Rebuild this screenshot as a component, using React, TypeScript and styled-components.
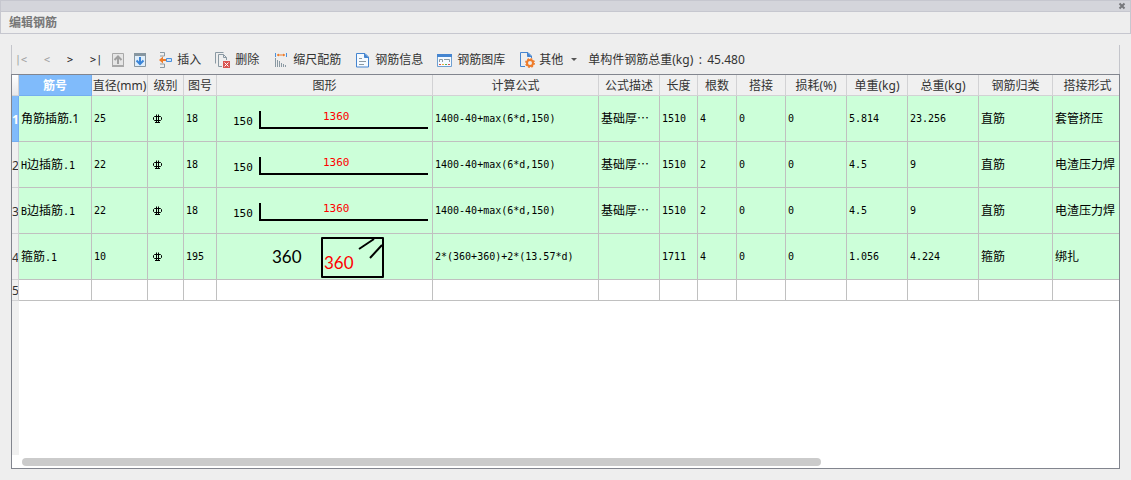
import React from "react";
import styled, { createGlobalStyle } from "styled-components";

const UI_FONT = `"Noto Sans", "Noto Sans CJK SC", sans-serif`;
const MONO_FONT = `"DejaVu Sans Mono", "Noto Sans CJK SC", monospace`;

const GlobalStyle = createGlobalStyle`
  * { box-sizing: border-box; }
  body { margin: 0; background: #eeeeee; font-family: ${UI_FONT}; font-size: 12px; color: #333; }
`;

const Window = styled.div`
  display: flex;
  flex-direction: column;
  min-height: 100vh;
`;

const Caption = styled.div`
  display: flex;
  justify-content: flex-end;
  align-items: center;
  height: 12px;
  padding-right: 4px;
  background: #d4d5db;
  border: 1px solid #c6c7cf;
`;

const CloseButton = styled.button`
  display: flex;
  padding: 0;
  border: 0;
  background: none;
`;

const TitleBar = styled.header`
  height: 22px;
  border: 1px solid #c6c7cf;
  border-top: 0;
`;

const Title = styled.h1`
  margin: 0;
  padding-left: 8px;
  font-size: 12px;
  font-weight: 700;
  line-height: 21px;
  color: #777;
`;

const Body = styled.main`
  display: flex;
  flex: 1;
  flex-direction: column;
  padding: 11px;
`;

const Toolbar = styled.div`
  display: flex;
  align-items: center;
  height: 29px;
  border: 1px solid #c4c5cb;
  border-width: 0 1px;
  white-space: nowrap;
`;

const NavGroup = styled.div`
  display: flex;
  gap: 17px;
  padding: 0 8px 0 3px;
`;

const NavButton = styled.button`
  padding: 0;
  border: 0;
  background: none;
  font: 10px/16px ${MONO_FONT};
  color: #222;
  &:disabled { color: #a0a0a0; }
`;

const MoveGroup = styled.div`
  display: flex;
  gap: 6px;
  padding-right: 9px;
`;

const ActionGroup = styled.div`
  display: flex;
  gap: 14px;
`;

const ToolButton = styled.button`
  display: flex;
  align-items: center;
  gap: 4px;
  padding: 0;
  border: 0;
  background: none;
  font: 12px/16px ${UI_FONT};
  color: #333;
`;

const Caret = styled.span`
  margin: 0 11px 0 4px;
  border: 3px solid transparent;
  border-top-color: #555;
  border-bottom: 0;
`;

const Total = styled.div`
  display: flex;
  line-height: 16px;
`;

const Colon = styled.span`
  width: 14px;
  text-align: center;
`;

const GridPanel = styled.section`
  display: flex;
  flex: 1;
  flex-direction: column;
  border: 1px solid #82858e;
  background: #fff;
  min-width: 0;
`;

const GridView = styled.div`
  flex: 1;
  overflow: hidden;
  background: linear-gradient(to right, #f0f0f0 7px, #fff 7px);
`;

const Table = styled.table`
  width: 100%;
  min-width: 1111px;
  table-layout: fixed;
  border-collapse: separate;
  border-spacing: 0;
`;

const HeadCell = styled.th<{ $active?: boolean }>`
  height: 21px;
  padding: 2px 0 0;
  border: 1px solid ${(p) => (p.$active ? "#74aef0" : "#d2d2d4")};
  border-width: 0 1px 1px 0;
  background: ${(p) => (p.$active ? "#80bbfb" : "#f0f0f0")};
  color: ${(p) => (p.$active ? "#fff" : "#333")};
  font-weight: ${(p) => (p.$active ? 700 : 400)};
  line-height: 18px;
  white-space: nowrap;
`;

const CornerCell = styled(HeadCell).attrs({ as: "td" })`
  background: linear-gradient(#fff, #e8e8ea);
`;

const RowHead = styled(HeadCell)`
  height: auto;
  overflow: hidden;
`;

const Cell = styled.td<{ $empty?: boolean }>`
  height: ${(p) => (p.$empty ? 21 : 46)}px;
  padding: 0 0 0 2px;
  border: 1px solid #c0c0c0;
  border-width: 0 1px 1px 0;
  background: ${(p) => (p.$empty ? "#fff" : "#ccffd9")};
  color: #000;
  line-height: 16px;
  white-space: nowrap;
  overflow: hidden;
`;

const ShapeCell = styled(Cell)`
  padding: 0;
`;

const GradeCell = styled(Cell)`
  padding-left: 4px;
`;

const Half = styled.span`
  font: 10px/16px ${MONO_FONT};
`;

const Full = styled.span`
  font: 12px/16px "Noto Sans CJK SC", sans-serif;
`;

const Drawing = styled.svg`
  display: block;
`;

const ShapeLabel = styled.text<{ $large?: boolean; $red?: boolean }>`
  font: ${(p) => (p.$large ? "17px Lato, sans-serif" : `11px ${MONO_FONT}`)};
  fill: ${(p) => (p.$red ? "#ff0000" : "#000")};
`;

const ScrollTrack = styled.div`
  height: 13px;
  padding: 3px 10px 2px;
`;

const ScrollThumb = styled.div`
  width: 73.5%;
  height: 8px;
  border-radius: 4px;
  background: #cbcbcb;
`;

/* Latin runs are set half-width, Chinese runs full-width. */
const Mixed = ({ text }: { text: string }) => (
  <>
    {(text.match(/[\x20-\x7e]+|[^\x20-\x7e]+/g) || []).map((run, i) =>
      /[\x20-\x7e]/.test(run) ? <Half key={i}>{run}</Half> : <Full key={i}>{run}</Full>
    )}
  </>
);

const Icon = ({ children }: { children: React.ReactNode }) => (
  <svg width="16" height="16" viewBox="0 0 16 16" fill="none" aria-hidden="true">
    {children}
  </svg>
);

const UpIcon = () => (
  <Icon>
    <path d="M2.500 1.500h11v13h-11z" fill="#e6e6e6" stroke="#a9a9a9" />
    <path d="M2 13h12v2H2z" fill="#a9a9a9" />
    <path d="M8 12V5M4.500 8L8 4.500 11.500 8" stroke="#a0a0a0" strokeWidth="2" />
  </Icon>
);

const DownIcon = () => (
  <Icon>
    <path d="M2.500 1.500h11v13h-11z" fill="#dfeefb" stroke="#8796a0" />
    <path d="M2 1h12v3H2z" fill="#8796a0" />
    <path d="M8 5v7M4.500 8.500L8 12l3.500-3.500" stroke="#3a85d8" strokeWidth="2" />
  </Icon>
);

const InsertIcon = () => (
  <Icon>
    <path d="M3 .5h4.500v3.500H3M3 15.500h4.500V12H3" stroke="#8a99a3" />
    <path d="M9.500 6.500h5v3h-5z" fill="#cfe4fa" stroke="#4a90dc" />
    <path d="M2 8l4-3.500v2.500h3v2H6v2.500z" fill="#ee7c2b" />
  </Icon>
);

const DeleteIcon = () => (
  <Icon>
    <path d="M.5 11.500v-11h8M3.500 14.500v-12h5l3 3V8M3.500 14.500H7M8.500 2.500v3h3" stroke="#8a99a3" />
    <path d="M8 9h7v7H8z" fill="#d9534f" />
    <path d="M9.500 10.500l4 4M13.500 10.500l-4 4" stroke="#fff" />
  </Icon>
);

const ScaleIcon = () => (
  <Icon>
    <path d="M2.500 1v4M13.500 1v4" stroke="#4a90dc" />
    <path d="M4 3h8" stroke="#ee7c2b" />
    <path d="M4 3l2-1.500v3zM12 3l-2-1.500v3z" fill="#ee7c2b" />
    <path d="M2.500 6v9M4.500 8v7M6.500 9v6M8.500 11v4M10.500 12v3M12.500 13v2" stroke="#8a99a3" />
  </Icon>
);

const InfoIcon = () => (
  <Icon>
    <path d="M1.500 1.500h8.500l3.500 3.500v10h-12z" fill="#f5faff" stroke="#4585d0" />
    <path d="M9.500 1.500v4h4" fill="#4585d0" stroke="#4585d0" />
    <path d="M4 6.500h3M4 9.500h7M4 12.500h5" stroke="#8a99a3" />
  </Icon>
);

const LibraryIcon = () => (
  <Icon>
    <path d="M.5 2.500h14v12H.5z" fill="#f5faff" stroke="#6f9fd0" />
    <path d="M0 2h15v3H0z" fill="#4585d0" />
    <path d="M2.500 10V7.500h3V10M7 7.500h5.500V10" stroke="#8a99a3" />
    <path d="M2 12.500h2" stroke="#e05050" />
    <path d="M5 12.500h2" stroke="#f0b030" />
    <path d="M8 12.500h2" stroke="#50b060" />
    <path d="M11 12.500h2" stroke="#e05050" />
  </Icon>
);

const OtherIcon = () => (
  <Icon>
    <path d="M6 14.500H1.500v-14h7.500l3.500 3.500v2" stroke="#4585d0" />
    <path d="M8.500 .5v4h4" fill="#4585d0" stroke="#4585d0" />
    <circle cx="11" cy="11" r="3" stroke="#ee7c2b" strokeWidth="2" />
    <circle cx="11" cy="11" r="4.200" stroke="#ee7c2b" strokeWidth="1.500" strokeDasharray="1.800 1.500" />
  </Icon>
);

const GradeSymbol = () => (
  <Drawing width="12" height="12" viewBox="0 0 12 12" fill="none" stroke="#000" role="img" aria-label="HRB400">
    <path d="M2.500 3.500h6l1 1v2l-1 1h-6l-1-1v-2zM4.500 1.500v8M6.500 1.500v8M3 9.500h5" />
  </Drawing>
);

const StarterShape = () => (
  <Drawing width="215" height="45">
    <ShapeLabel x="16" y="29">150</ShapeLabel>
    <ShapeLabel x="106" y="24" $red>1360</ShapeLabel>
    <path d="M43 15v17h168" fill="none" stroke="#000" strokeWidth="2" />
  </Drawing>
);

const StirrupShape = () => (
  <Drawing width="215" height="45">
    <ShapeLabel x="55" y="29" $large>360</ShapeLabel>
    <ShapeLabel x="107" y="35" $large $red>360</ShapeLabel>
    <path d="M105 4h61v39h-61zM142 15l15-10M153 24l12-13" fill="none" stroke="#000" strokeWidth="2" strokeLinejoin="round" />
  </Drawing>
);

const columns: [string, number][] = [
  ["筋号", 73], ["直径(mm)", 56], ["级别", 36], ["图号", 33], ["图形", 216],
  ["计算公式", 166], ["公式描述", 61], ["长度", 38], ["根数", 39], ["搭接", 49],
  ["损耗(%)", 61], ["单重(kg)", 61], ["总重(kg)", 71], ["钢筋归类", 74], ["搭接形式", 70],
];

const rows = [
  ["角筋插筋.1", "25", "grade", "18", "starter", "1400-40+max(6*d,150)", "基础厚…", "1510", "4", "0", "0", "5.814", "23.256", "直筋", "套管挤压"],
  ["H边插筋.1", "22", "grade", "18", "starter", "1400-40+max(6*d,150)", "基础厚…", "1510", "2", "0", "0", "4.5", "9", "直筋", "电渣压力焊"],
  ["B边插筋.1", "22", "grade", "18", "starter", "1400-40+max(6*d,150)", "基础厚…", "1510", "2", "0", "0", "4.5", "9", "直筋", "电渣压力焊"],
  ["箍筋.1", "10", "grade", "195", "stirrup", "2*(360+360)+2*(13.57*d)", "", "1711", "4", "0", "0", "1.056", "4.224", "箍筋", "绑扎"],
];

const renderCell = (value: string, r: number, c: number) => {
  if (value === "starter" || value === "stirrup")
    return <ShapeCell key={c}>{value === "starter" ? <StarterShape /> : <StirrupShape />}</ShapeCell>;
  if (value === "grade") return <GradeCell key={c}><GradeSymbol /></GradeCell>;
  return <Cell key={c}>{r === 0 && c === 0 ? value : <Mixed text={value} />}</Cell>;
};

export default function App() {
  return (
    <Window>
      <GlobalStyle />
      <Caption>
        <CloseButton aria-label="关闭">
          <svg width="8" height="8" viewBox="0 0 8 8" stroke="#77787c" strokeWidth="2" aria-hidden="true">
            <path d="M1.500 1.500l5 5M6.500 1.500l-5 5" />
          </svg>
        </CloseButton>
      </Caption>
      <TitleBar><Title>编辑钢筋</Title></TitleBar>
      <Body>
        <Toolbar>
          <NavGroup>
            <NavButton disabled>|&lt;</NavButton>
            <NavButton disabled>&lt;</NavButton>
            <NavButton>&gt;</NavButton>
            <NavButton>&gt;|</NavButton>
          </NavGroup>
          <MoveGroup>
            <ToolButton disabled aria-label="上移"><UpIcon /></ToolButton>
            <ToolButton aria-label="下移"><DownIcon /></ToolButton>
          </MoveGroup>
          <ActionGroup>
            <ToolButton><InsertIcon />插入</ToolButton>
            <ToolButton><DeleteIcon />删除</ToolButton>
            <ToolButton><ScaleIcon />缩尺配筋</ToolButton>
            <ToolButton><InfoIcon />钢筋信息</ToolButton>
            <ToolButton><LibraryIcon />钢筋图库</ToolButton>
            <ToolButton><OtherIcon />其他<Caret /></ToolButton>
          </ActionGroup>
          <Total>单构件钢筋总重(kg)<Colon>:</Colon>45.480</Total>
        </Toolbar>
        <GridPanel>
          <GridView>
            <Table>
              <colgroup>
                <col width={7} />
                {columns.map(([name, width]) => <col key={name} width={width} />)}
              </colgroup>
              <thead>
                <tr>
                  <CornerCell />
                  {columns.map(([name], i) => <HeadCell key={name} scope="col" $active={i === 0}>{name}</HeadCell>)}
                </tr>
              </thead>
              <tbody>
                {rows.map((row, r) => (
                  <tr key={r}>
                    <RowHead scope="row" $active={r === 0}>{r + 1}</RowHead>
                    {row.map((value, c) => renderCell(value, r, c))}
                  </tr>
                ))}
                <tr>
                  <RowHead scope="row">5</RowHead>
                  {columns.map(([name]) => <Cell key={name} $empty />)}
                </tr>
              </tbody>
            </Table>
          </GridView>
          <ScrollTrack><ScrollThumb /></ScrollTrack>
        </GridPanel>
      </Body>
    </Window>
  );
}
